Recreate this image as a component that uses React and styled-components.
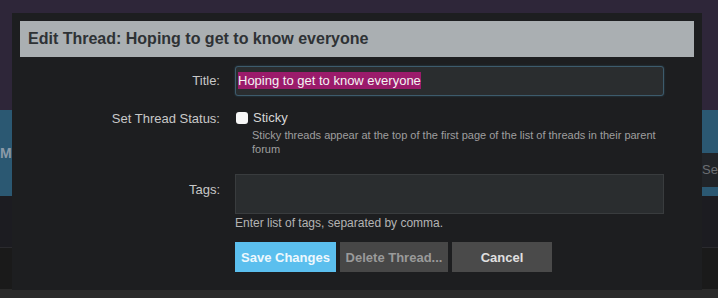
import React from "react";
import styled, { createGlobalStyle } from "styled-components";

const Global = createGlobalStyle`
  html, body { margin: 0; padding: 0; }
  body {
    width: 718px; height: 298px; overflow: hidden;
    background: #2a2a2a;
    font-family: "Liberation Sans", Arial, sans-serif;
  }
`;

const Page = styled.div`
  position: relative;
  width: 718px;
  height: 298px;
  display: flex;
  flex-direction: column;
  overflow: hidden;
`;

const TopBand = styled.div`
  height: 110px;
  background: #2e2639;
`;

const NavBand = styled.div`
  height: 87px;
  background: #2b5872;
  display: flex;
  justify-content: space-between;
`;

const NavLogo = styled.div`
  padding-top: 35px;
  margin-left: -4px;
  color: #8a9aa8;
  font-weight: bold;
  font-size: 14px;
`;

const NavRight = styled.div`
  width: 16px;
  display: flex;
  flex-direction: column;
`;

const NavBlue = styled.div`
  height: 43px;
`;

const SearchArea = styled.div`
  height: 34px;
  background: #212428;
  color: #6c6f73;
  font-size: 13px;
  line-height: 34px;
  white-space: nowrap;
  overflow: hidden;
`;

const Band = styled.div`
  height: ${(p) => p.$h}px;
  background: ${(p) => p.$bg};
  border-bottom: ${(p) => (p.$line ? "1px solid #2a2a2e" : "none")};
`;

const Modal = styled.div`
  position: absolute;
  left: 12px;
  top: 13px;
  width: 690px;
  height: 277px;
  box-sizing: border-box;
  padding: 8px;
  background: #1d1e20;
  display: flex;
  flex-direction: column;
`;

const Header = styled.h2`
  margin: 0;
  height: 36px;
  background: #aaafb2;
  color: #2e3235;
  font-size: 16px;
  font-weight: bold;
  line-height: 36px;
  padding: 0 8px;
`;

const Form = styled.div`
  display: grid;
  grid-template-columns: 200px 429px;
  column-gap: 15px;
  margin-top: 9px;
`;

const Label = styled.div`
  text-align: right;
  color: #c8c8c8;
  font-size: 13px;
  padding-top: ${(p) => p.$pt || 0}px;
  margin-top: ${(p) => p.$mt || 0}px;
`;

const Field = styled.div`
  margin-top: ${(p) => p.$mt || 0}px;
`;

const TextBox = styled.div`
  box-sizing: border-box;
  height: ${(p) => p.$h}px;
  background: #2a2d2f;
  border: 1px solid ${(p) => (p.$focus ? "#3d5b6c" : "#393c3e")};
  border-radius: ${(p) => (p.$focus ? "3px" : "0")};
  box-shadow: ${(p) => (p.$focus ? "0 0 2px #2f4c5c" : "none")};
  padding: 0 2px;
  color: #e8e8e8;
  font-size: 13px;
  line-height: 28px;
`;

const Selected = styled.span`
  background: #9b1b6b;
  color: #f4f4f4;
  padding: 1px 0;
`;

const CheckRow = styled.label`
  display: flex;
  align-items: center;
  gap: 5px;
  color: #d6d6d6;
  font-size: 13px;
`;

const Box = styled.span`
  width: 12px;
  height: 12px;
  border-radius: 3px;
  background: #f7f7f7;
  margin-left: 1px;
`;

const Desc = styled.div`
  color: #9f9f9f;
  font-size: 11px;
  line-height: 14px;
  padding-left: ${(p) => p.$pl || 0}px;
  margin-top: ${(p) => p.$mt || 0}px;
`;

const Hint = styled.div`
  color: #b4b4b4;
  font-size: 12px;
  margin-top: 2px;
`;

const Buttons = styled.div`
  display: flex;
  gap: 4px;
  margin-top: 12px;
`;

const Button = styled.button`
  height: 30px;
  width: ${(p) => p.$w}px;
  border: none;
  padding: 0;
  background: ${(p) => p.$bg};
  color: ${(p) => p.$fg};
  font-family: "Liberation Sans", Arial, sans-serif;
  font-weight: bold;
  font-size: 13px;
`;

export default function App() {
  return (
    <>
      <Global />
      <Page>
        <TopBand />
        <NavBand>
          <NavLogo>.M</NavLogo>
          <NavRight>
            <NavBlue />
            <SearchArea>Search</SearchArea>
          </NavRight>
        </NavBand>
        <Band $h={51} $bg="#1c1c21" $line />
        <Band $h={41} $bg="#1a1a1a" />
        <Band $h={9} $bg="#2a2a2a" />
        <Modal>
          <Header>Edit Thread: Hoping to get to know everyone</Header>
          <Form>
            <Label $pt={7}>Title:</Label>
            <Field>
              <TextBox $h={30} $focus>
                <Selected>Hoping to get to know everyone</Selected>
              </TextBox>
            </Field>

            <Label $mt={15}>Set Thread Status:</Label>
            <Field $mt={14}>
              <CheckRow>
                <Box />
                Sticky
              </CheckRow>
              <Desc $pl={17} $mt={3}>
                Sticky threads appear at the top of the first page of the list of threads in their parent forum
              </Desc>
            </Field>

            <Label $mt={26}>Tags:</Label>
            <Field $mt={18}>
              <TextBox $h={40} />
              <Hint>Enter list of tags, separated by comma.</Hint>
              <Buttons>
                <Button $w={101} $bg="#5bbfee" $fg="#eef8fd">Save Changes</Button>
                <Button $w={108} $bg="#474747" $fg="#9a9a9a">Delete Thread...</Button>
                <Button $w={100} $bg="#4a4a4a" $fg="#e0e0e0">Cancel</Button>
              </Buttons>
            </Field>
          </Form>
        </Modal>
      </Page>
    </>
  );
}
